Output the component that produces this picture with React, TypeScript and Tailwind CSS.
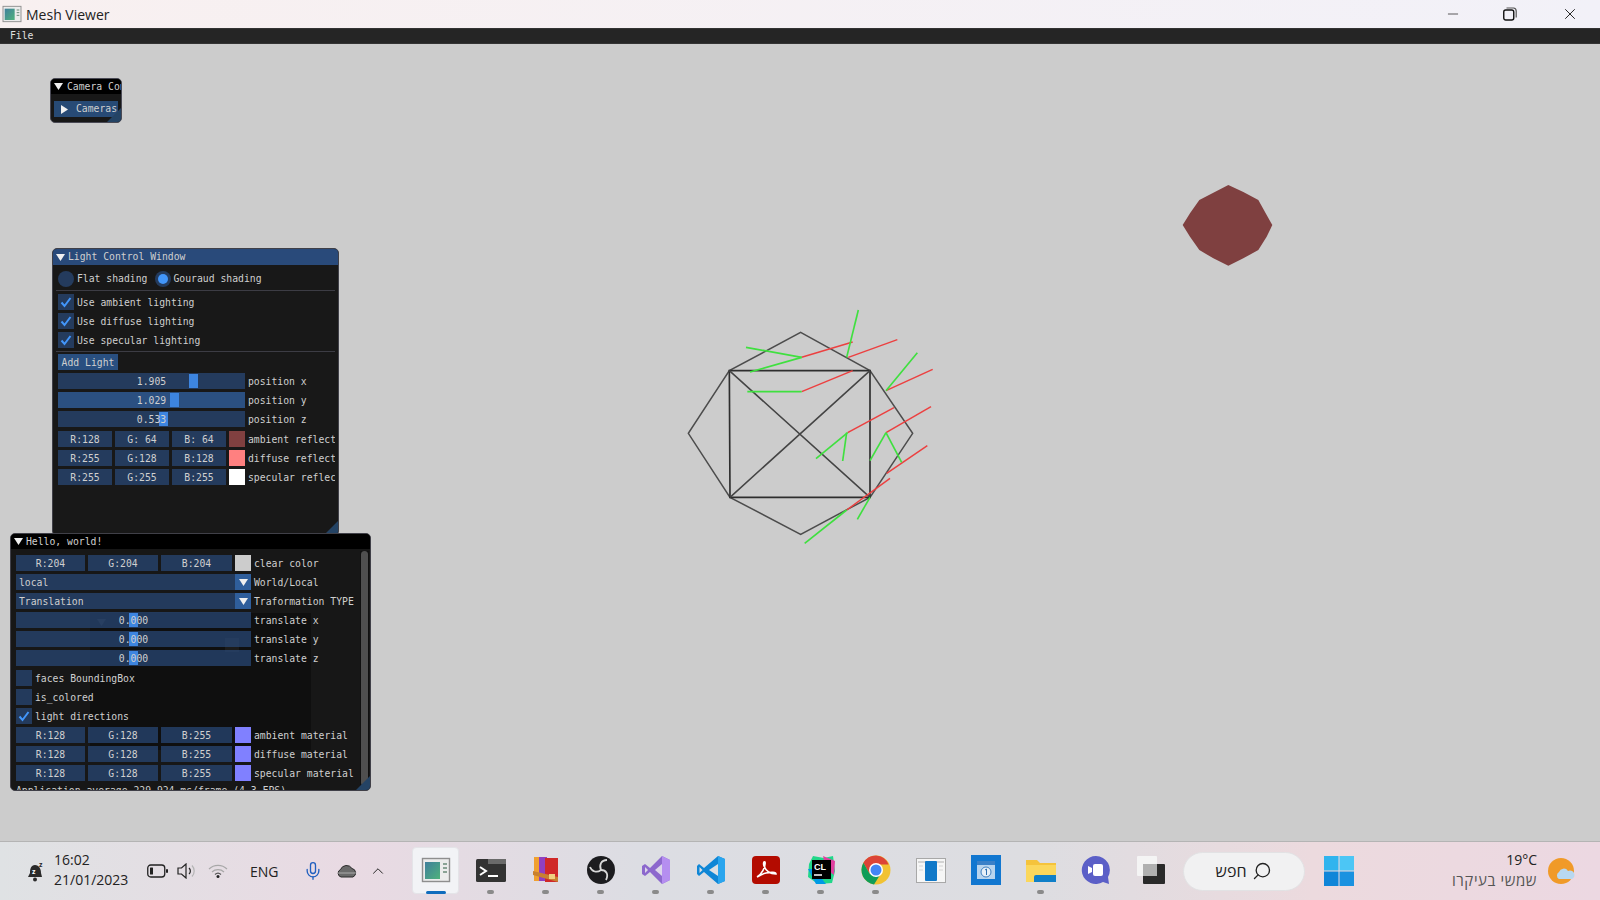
import React from 'react';
import { ChevronUp, Mic, Minus, Search, X } from 'lucide-react';

const mono = "font-['DejaVu_Sans_Mono','Liberation_Mono',monospace] text-[9.75px] leading-[18px] text-[#cfcfcf] whitespace-nowrap";
const frame = 'bg-[#294a7a]/70';

function Tri({ right = false }: { right?: boolean }) {
  return (
    <svg width="9" height="9" viewBox="0 0 9 9" className="shrink-0">
      <polygon points={right ? '1,0 8,4.5 1,9' : '0,1 9,1 4.5,8'} fill="#f0f0f0" />
    </svg>
  );
}

function Check({ label, on = true, className = '' }: { label: string; on?: boolean; className?: string }) {
  return (
    <div className={`flex h-4 gap-[3px] ${className}`}>
      <div className={`w-4 h-4 shrink-0 flex items-center justify-center ${frame}`}>
        {on && (
          <svg width="12" height="12" viewBox="0 0 12 12">
            <path d="M1.5 6.5 L4.5 10 L10.5 2" fill="none" stroke="#4296fa" strokeWidth="2" />
          </svg>
        )}
      </div>
      <span>{label}</span>
    </div>
  );
}

function Slider({ value, label, w, grab, hovered = false }: { value: string; label: string; w: string; grab: string; hovered?: boolean }) {
  return (
    <div className="flex h-4 gap-[3px]">
      <div className={`relative h-4 shrink-0 text-center ${w} ${hovered ? 'bg-[#2b5081]' : frame}`}>
        <div className={`absolute top-[1px] bottom-[1px] w-[9px] bg-[#3d85e0] ${grab}`} />
        <span className="relative">{value}</span>
      </div>
      <span>{label}</span>
    </div>
  );
}

function ColorRow({ r, g, b, swatch, label, wide = false, className = '' }: { r: string; g: string; b: string; swatch: string; label: string; wide?: boolean; className?: string }) {
  const box = `${frame} h-4 shrink-0 text-center`;
  return (
    <div className={`flex h-4 gap-[3px] ${className}`}>
      <div className={`${box} ${wide ? 'w-[69px]' : 'w-[54px]'}`}>{r}</div>
      <div className={`${box} ${wide ? 'w-[70px]' : 'w-[54px]'}`}>{g}</div>
      <div className={`${box} ${wide ? 'w-[71px]' : 'w-[54px]'}`}>{b}</div>
      <div className={`w-4 h-4 shrink-0 ${swatch}`} />
      <span>{label}</span>
    </div>
  );
}

function Combo({ value, label }: { value: string; label: string }) {
  return (
    <div className="flex h-4 gap-[3px]">
      <div className={`flex w-[235px] h-4 shrink-0 justify-between ${frame}`}>
        <span className="pl-[3px]">{value}</span>
        <div className="w-4 h-4 bg-[#2f5e9b] flex items-center justify-center"><Tri /></div>
      </div>
      <span>{label}</span>
    </div>
  );
}

function Grip() {
  return <div className="absolute right-0 bottom-0 w-[14px] h-[14px] bg-[#244364] [clip-path:polygon(100%_0,100%_100%,0_100%)]" />;
}

function CameraWindow() {
  return (
    <div className={`absolute left-[50px] top-[34px] w-[72px] h-[45px] rounded-[5px] overflow-hidden bg-[#181818] border border-[#4a4a55] ${mono}`}>
      <div className="flex items-center h-[15px] pl-[3px] gap-[4px] bg-black">
        <Tri />
        <span>Camera Control</span>
      </div>
      <div className="flex items-center gap-[7px] h-4 mt-[7px] ml-[3px] mr-[3px] pl-[6px] bg-[#274a75] overflow-hidden">
        <Tri right />
        <span>Cameras</span>
      </div>
      <Grip />
    </div>
  );
}

function LightWindow() {
  return (
    <div className={`absolute left-[52px] top-[204px] w-[287px] h-[288px] rounded-[5px] overflow-hidden bg-[#181818] border border-[#404048] ${mono}`}>
      <div className="flex items-center h-4 pl-[3px] gap-[3px] bg-[#294a7a]">
        <Tri />
        <span>Light Control Window</span>
      </div>
      <div className="flex flex-col gap-[3px] pt-[6px] pl-[5px] mr-[3px] overflow-hidden">
        <div className="flex h-4 items-center">
          <div className={`w-4 h-4 shrink-0 rounded-full ${frame}`} />
          <span className="ml-[3px]">Flat shading</span>
          <div className={`w-4 h-4 shrink-0 rounded-full ml-[8px] flex items-center justify-center ${frame}`}>
            <div className="w-[10px] h-[10px] rounded-full bg-[#4296fa]" />
          </div>
          <span className="ml-[2px]">Gouraud shading</span>
        </div>
        <div className="h-px -ml-[2px] bg-[#3c3c44]" />
        <Check label="Use ambient lighting" />
        <Check label="Use diffuse lighting" />
        <Check label="Use specular lighting" />
        <div className="h-px -ml-[2px] bg-[#3c3c44]" />
        <div className="w-[60px] h-4 text-center bg-[#294f80] -mt-px">Add Light</div>
        <Slider value="1.905" label="position x" w="w-[187px]" grab="left-[131px]" />
        <Slider value="1.029" label="position y" w="w-[187px]" grab="left-[112px]" hovered />
        <Slider value="0.533" label="position z" w="w-[187px]" grab="left-[101px]" />
        <ColorRow className="mt-px" r="R:128" g="G: 64" b="B: 64" swatch="bg-[#804040]" label="ambient reflection" />
        <ColorRow r="R:255" g="G:128" b="B:128" swatch="bg-[#ff8080]" label="diffuse reflection" />
        <ColorRow r="R:255" g="G:255" b="B:255" swatch="bg-white" label="specular reflection" />
      </div>
      <Grip />
    </div>
  );
}

function HelloWindow() {
  return (
    <div className={`absolute left-[10px] top-[489px] w-[361px] h-[258px] rounded-[5px] overflow-hidden bg-[#171717] border border-[#404048] ${mono}`}>
      <div className="flex items-center h-[15px] pl-[3px] gap-[3px] bg-black">
        <Tri />
        <span>Hello, world!</span>
      </div>
      {/* window behind shows through */}
      <div className="absolute left-[79px] top-[79px] w-[221px] h-[137px] bg-black/35">
        <div className="absolute left-[7px] top-[5px] opacity-10"><Tri /></div>
        <div className="absolute left-[135px] top-[25px] w-[14px] h-[14px] bg-white/5" />
      </div>
      <div className="relative flex flex-col gap-[3px] pt-[6px] pl-[5px] pr-[10px] h-[241px] overflow-hidden">
        <ColorRow wide r="R:204" g="G:204" b="B:204" swatch="bg-[#cccccc]" label="clear color" />
        <Combo value="local" label="World/Local" />
        <Combo value="Translation" label="Traformation TYPE" />
        <Slider value="0.000" label="translate x" w="w-[235px]" grab="left-[113px]" />
        <Slider value="0.000" label="translate y" w="w-[235px]" grab="left-[113px]" />
        <Slider value="0.000" label="translate z" w="w-[235px]" grab="left-[113px]" />
        <Check className="mt-px" on={false} label="faces BoundingBox" />
        <Check on={false} label="is_colored" />
        <Check label="light directions" />
        <ColorRow wide r="R:128" g="G:128" b="B:255" swatch="bg-[#8080ff]" label="ambient material" />
        <ColorRow wide r="R:128" g="G:128" b="B:255" swatch="bg-[#8080ff]" label="diffuse material" />
        <ColorRow wide r="R:128" g="G:128" b="B:255" swatch="bg-[#8080ff]" label="specular material" />
        <div className="-mt-[2px]">Application average 229.924 ms/frame (4.3 FPS)</div>
      </div>
      <div className="absolute right-[1px] top-[17px] bottom-[4px] w-[9px] px-[1px] bg-black/30">
        <div className="h-full rounded-full bg-[#4f4f4f]" />
      </div>
      <Grip />
    </div>
  );
}

function Mesh() {
  const red = [[395,172,548,126],[535,172,682,119],[395,275,548,212],[648,272,788,208],[533,398,672,323],[648,398,783,320],[650,520,772,437],[530,630,660,535]];
  const green = [[395,172,228,142],[395,172,240,216],[530,172,565,30],[395,275,232,275],[648,272,742,158],[533,398,438,476],[530,398,518,483],[648,398,600,482],[648,398,695,487],[600,592,562,658],[530,630,404,730]];
  return (
    <svg className="absolute left-[670px] top-[256px]" width="270" height="250" viewBox="0 0 810 750">
      <polygon points="392,97 600,212 728,400 600,592 392,703 180,592 55,400 178,212" fill="none" stroke="#4c4c4c" strokeWidth="4.5" />
      <polygon points="178,212 600,212 600,592 180,592" fill="none" stroke="#2e2e2e" strokeWidth="5" />
      <path d="M178 212 L600 592 M180 592 L600 212" stroke="#444" strokeWidth="4.5" />
      {red.map((l, i) => <line key={i} x1={l[0]} y1={l[1]} x2={l[2]} y2={l[3]} stroke="#ec4040" strokeWidth="4.5" />)}
      {green.map((l, i) => <line key={i} x1={l[0]} y1={l[1]} x2={l[2]} y2={l[3]} stroke="#3fe03f" strokeWidth="5" />)}
    </svg>
  );
}

function Blob() {
  return (
    <svg className="absolute left-[1160px] top-[126px]" width="120" height="110" viewBox="0 0 360 330">
      <polygon points="205,45 250,66 295,90 320,135 337,165 320,200 295,240 250,265 205,287 160,265 118,240 90,200 68,165 90,130 118,90 160,68" fill="#7f4040" />
    </svg>
  );
}

function AppIcon({ size = 30, id }: { size?: number; id: string }) {
  return (
    <svg width={size} height={size} viewBox="0 0 30 30">
      <defs>
        <linearGradient id={id} x1="0" y1="0" x2="1" y2="1">
          <stop offset="0" stopColor="#3f7f9c" />
          <stop offset="1" stopColor="#4fb27c" />
        </linearGradient>
      </defs>
      <rect x="1.5" y="3.5" width="27" height="23" fill="#ececec" stroke="#8e8e8e" strokeWidth="1.4" />
      <rect x="4" y="7" width="15" height="17" fill={`url(#${id})`} />
      <path d="M22 9h4M22 13h4M22 17h4" stroke="#6a8a78" strokeWidth="1.5" />
    </svg>
  );
}

const icons: Record<string, React.ReactNode> = {
  terminal: (
    <svg width="30" height="30" viewBox="0 0 30 30">
      <rect x="0" y="4" width="30" height="23" rx="1.5" fill="#333" />
      <rect x="12" y="4" width="18" height="5" fill="#6a6a6a" />
      <path d="M4 12 L10 16 L4 20" fill="none" stroke="#fff" strokeWidth="2" />
      <path d="M12 21h10" stroke="#fff" strokeWidth="2" />
    </svg>
  ),
  rar: (
    <svg width="30" height="30" viewBox="0 0 30 30">
      <rect x="3" y="2" width="8" height="24" fill="#f0a030" />
      <rect x="8" y="2" width="8" height="24" fill="#9040c0" />
      <rect x="14" y="3" width="13" height="24" fill="#d02828" />
      <path d="M2 16 L27 22 L27 27 L2 20Z" fill="#c88030" />
      <rect x="18" y="19" width="6" height="5" fill="#f0d080" />
    </svg>
  ),
  obs: (
    <svg width="30" height="30" viewBox="0 0 30 30">
      <circle cx="15" cy="15" r="14" fill="#1c1c1f" />
      <path d="M15 15 C13 10 15 5 21 5" fill="none" stroke="#d8d8d8" strokeWidth="1.8" />
      <path d="M15 15 C11 18 6 17 4 12" fill="none" stroke="#d8d8d8" strokeWidth="1.8" />
      <path d="M15 15 C20 15 23 19 20 25" fill="none" stroke="#d8d8d8" strokeWidth="1.8" />
    </svg>
  ),
  vs: (
    <svg width="30" height="30" viewBox="0 0 30 30">
      <path d="M21 1 L29 5 V25 L21 29 L9 17 L4 21 L1 19 V11 L4 9 L9 13Z" fill="#8c68cd" />
      <path d="M21 9 L14 15 L21 21Z" fill="#dcd6ea" />
      <path d="M4 12 V18 L7 15Z" fill="#dcd6ea" />
      <path d="M21 1 L29 5 V25 L21 29 V21 L21 9Z" fill="#b58ef0" />
    </svg>
  ),
  code: (
    <svg width="30" height="30" viewBox="0 0 30 30">
      <path d="M22 1 L29 4 V26 L22 29 L8 17 L3 21 L1 19 V11 L3 9 L8 13Z" fill="#0f86d6" />
      <path d="M22 1 L29 4 V26 L22 29Z" fill="#2aa5ee" />
      <path d="M22 9 L13 15 L22 21Z" fill="#dde0e4" />
      <path d="M3.5 12 V18 L6.5 15Z" fill="#dde0e4" />
    </svg>
  ),
  acrobat: (
    <svg width="30" height="30" viewBox="0 0 30 30">
      <rect x="1" y="1" width="28" height="28" rx="4" fill="#b30b00" />
      <path d="M6 22 C10 20 15 12 14 7 C13 6 12 8 13 11 C15 16 19 19 25 19 C25 17 20 17 15 18 C11 19 8 21 6 22Z" fill="none" stroke="#fff" strokeWidth="1.6" />
    </svg>
  ),
  clion: (
    <svg width="30" height="30" viewBox="0 0 30 30">
      <path d="M7 1 L18 3 L27 1 L29 16 L26 28 L12 29 L2 22 L3 9Z" fill="#21d789" />
      <path d="M17 1 L29 6 L28 20 L20 14Z" fill="#e040a0" />
      <path d="M2 14 L10 29 L20 29 L8 14Z" fill="#009ae5" />
      <rect x="6" y="5" width="19" height="19" fill="#000" />
      <text x="8" y="15" fill="#fff" fontFamily="Liberation Sans" fontWeight="700" fontSize="9">CL</text>
      <path d="M8 20h8" stroke="#fff" strokeWidth="1.5" />
    </svg>
  ),
  chrome: (
    <svg width="30" height="30" viewBox="0 0 30 30">
      <circle cx="15" cy="15" r="14.5" fill="#f1c232" />
      <path d="M15 .5 A14.5 14.5 0 0 0 2.4 7.8 L8.5 18.5 L15 9.5 H27.6 A14.5 14.5 0 0 0 15 .5Z" fill="#dc4437" />
      <path d="M2.4 7.8 A14.5 14.5 0 0 0 13 29.4 L19 20 L8.5 18.5Z" fill="#0f9d58" />
      <circle cx="15" cy="15" r="7" fill="#fff" />
      <circle cx="15" cy="15" r="5.5" fill="#4285f4" />
    </svg>
  ),
  notes: (
    <svg width="30" height="30" viewBox="0 0 30 30">
      <rect x=".5" y="3.5" width="29" height="24" fill="#f6f6f6" stroke="#a8a8a8" />
      <path d="M2 7h26" stroke="#b0b0b0" />
      <rect x="9" y="6" width="12" height="20" rx="1" fill="#1078c8" />
      <path d="M3 11h4M3 15h4M23 11h4M23 15h4" stroke="#d4d4d4" />
    </svg>
  ),
  calendar: (
    <svg width="30" height="30" viewBox="0 0 30 30">
      <rect width="30" height="30" fill="#1277d0" />
      <rect x="6" y="6" width="18" height="18" fill="#b8d4ee" />
      <rect x="6" y="6" width="18" height="4" fill="#3a80c8" />
      <circle cx="15" cy="17" r="5" fill="#e8f0f8" stroke="#4080c0" />
      <path d="M14 15 l1.5 -1 v6" fill="none" stroke="#3070b0" />
    </svg>
  ),
  folder: (
    <svg width="30" height="30" viewBox="0 0 30 30">
      <path d="M0 5 H11 L14 8 H30 V27 H0Z" fill="#f5c33b" />
      <path d="M0 10 H30 V27 H0Z" fill="#fbd75b" />
      <path d="M10 20 H30 V27 H8 V22 A2 2 0 0 1 10 20Z" fill="#0f7fc8" />
    </svg>
  ),
  chat: (
    <svg width="30" height="30" viewBox="0 0 30 30">
      <path d="M15 1 A14 14 0 1 0 22 27 L28 29 L27 22 A14 14 0 0 0 15 1Z" fill="#5b5fc7" />
      <rect x="12" y="9" width="10" height="12" rx="2" fill="#fff" />
      <path d="M7 11 L11 13 V17 L7 19Z" fill="#fff" />
    </svg>
  ),
  stacks: (
    <svg width="30" height="30" viewBox="0 0 30 30">
      <rect x="1" y="1" width="20" height="20" rx="1" fill="#f4f4f4" />
      <rect x="7" y="9" width="22" height="20" rx="1" fill="#2a2a2a" />
      <rect x="7" y="9" width="14" height="12" fill="#b0b0b0" />
    </svg>
  ),
};

function TaskItem({ name, dot = true }: { name: string; dot?: boolean }) {
  return (
    <div className="relative w-[55px] h-full shrink-0 flex items-center justify-center pb-[2px]">
      {icons[name]}
      {dot && <div className="absolute bottom-[6px] w-[7px] h-1 rounded-full bg-[#8a8a8a]" />}
    </div>
  );
}

function Taskbar() {
  const apps = ['terminal', 'rar', 'obs', 'vs', 'code', 'acrobat', 'clion', 'chrome', 'notes', 'calendar', 'folder', 'chat', 'stacks'];
  const noDot = ['notes', 'calendar', 'chat', 'stacks'];
  return (
    <div className="flex items-center h-[59px] shrink-0 pl-[27px] border-t border-[#b4b4b4] bg-[linear-gradient(90deg,#dfe2e4_0%,#e9dae3_22%,#dcdde3_40%,#dddde1_65%,#ecdade_82%,#ecd8e2_100%)] font-['Open_Sans','Liberation_Sans',sans-serif] text-[#222]">
      <svg width="18" height="21" viewBox="0 0 18 21" className="shrink-0">
        <path d="M8 4 C4 4 3 8 3 12 L1 16 H15 L14 12 C14 8 12 4 8 4Z" fill="#2a2a2a" />
        <circle cx="8" cy="18.5" r="2" fill="#2a2a2a" />
        <text x="5" y="13" fontSize="7" fontWeight="700" fill="#fff">z</text>
        <text x="12" y="6" fontSize="7" fontWeight="700" fill="#2a2a2a">z</text>
      </svg>
      <div className="ml-[9px] w-[73px] -mt-[3px] text-[14px] leading-[20px] whitespace-nowrap shrink-0">
        <div>16:02</div>
        <div>21/01/2023</div>
      </div>
      <svg width="21" height="14" viewBox="0 0 21 14" className="ml-[20px] shrink-0">
        <rect x=".75" y="1" width="17" height="12" rx="3" fill="none" stroke="#222" strokeWidth="1.3" />
        <rect x="3" y="3.5" width="3" height="7" rx=".5" fill="#222" />
        <rect x="19" y="5" width="2" height="4" rx="1" fill="#222" />
      </svg>
      <svg width="20" height="16" viewBox="0 0 20 16" className="ml-[9px] shrink-0">
        <path d="M1 5 H4.5 L9 1 V15 L4.5 11 H1Z" fill="none" stroke="#222" strokeWidth="1.2" />
        <path d="M12 5 A4 4 0 0 1 12 11" fill="none" stroke="#222" strokeWidth="1.2" />
        <path d="M15 2.5 A8 8 0 0 1 15 13.5" fill="none" stroke="#b5b5b5" strokeWidth="1.2" />
      </svg>
      <svg width="20" height="14" viewBox="0 0 20 14" className="ml-[11px] shrink-0">
        <path d="M1 5 A13 13 0 0 1 19 5 M4 8 A9 9 0 0 1 16 8" fill="none" stroke="#a8a8a8" strokeWidth="1.2" />
        <path d="M7 10.5 A4.5 4.5 0 0 1 13 10.5" fill="none" stroke="#555" strokeWidth="1.2" />
        <circle cx="10" cy="12.5" r="1.5" fill="#222" />
      </svg>
      <span className="ml-[22px] w-[28px] text-[14px] shrink-0">ENG</span>
      <Mic size={20} strokeWidth={1.6} className="ml-[25px] text-[#1f5fbf] shrink-0" />
      <svg width="22" height="14" viewBox="0 0 22 14" className="ml-[13px] shrink-0">
        <path d="M5 13 A4 4 0 0 1 4.5 5.5 A6.5 6.5 0 0 1 16 4.5 A4.5 4.5 0 0 1 17 13Z" fill="#6a6a6a" stroke="#2a2a2a" />
        <path d="M1.5 9 H21" stroke="#d8d8d8" strokeWidth=".6" />
      </svg>
      <ChevronUp size={18} strokeWidth={1.3} className="ml-[11px] shrink-0" />
      <div className="relative w-[55px] h-full ml-[21px] shrink-0 flex items-center justify-center pb-[2px]">
        <div className="absolute left-[4px] top-[5px] w-[47px] h-[47px] rounded-[4px] bg-[#f2f3f6] border border-[#e4e4e8]" />
        <div className="relative"><AppIcon id="meshtask" /></div>
        <div className="absolute bottom-[6px] w-5 h-[3px] rounded-full bg-[#0f6cbd]" />
      </div>
      {apps.map((a) => <TaskItem key={a} name={a} dot={!noDot.includes(a)} />)}
      <div className="flex items-center justify-center gap-[6px] w-[122px] h-[39px] ml-[5px] shrink-0 rounded-full bg-[#f1f1f2] border border-[#e2e2e4]">
        <span dir="rtl" className="text-[16px] leading-none">חפש</span>
        <Search size={20} strokeWidth={1.6} className="-scale-x-100" />
      </div>
      <svg width="30" height="30" viewBox="0 0 30 30" className="ml-[19px] shrink-0">
        <rect x="0" y="0" width="14.5" height="14.5" fill="#30b4ee" />
        <rect x="15.5" y="0" width="14.5" height="14.5" fill="#4cc6f5" />
        <rect x="0" y="15.5" width="14.5" height="14.5" fill="#0f85d8" />
        <rect x="15.5" y="15.5" width="14.5" height="14.5" fill="#1a92e0" />
      </svg>
      <div className="ml-auto flex items-center pr-[24px]">
        <div className="text-right whitespace-nowrap -mt-[2px]">
          <div className="text-[14px] leading-[20px]">19°C</div>
          <div dir="rtl" className="text-[15px] tracking-[0.6px] leading-[20px] text-[#555]">שמשי בעיקרו</div>
        </div>
        <svg width="28" height="28" viewBox="0 0 28 28" className="ml-[11px] shrink-0">
          <circle cx="13" cy="14" r="13" fill="#f09a28" />
          <path d="M11 22 A4 4 0 0 1 11 15 A5 5 0 0 1 20 14 A4 4 0 0 1 24 22Z" fill="#b8d8f0" />
        </svg>
      </div>
    </div>
  );
}

export default function App() {
  return (
    <div className="flex flex-col w-[1600px] h-[900px] overflow-hidden bg-[#cccccc]">
      <div className="flex items-center h-7 shrink-0 pl-[2px] bg-[linear-gradient(90deg,#f8f0f0,#f2f1f8)]">
        <AppIcon size={20} id="meshtitle" />
        <span className="ml-1 mt-px text-[14px] text-[#222] font-['Open_Sans','Liberation_Sans',sans-serif]">Mesh Viewer</span>
        <div className="ml-auto flex items-center">
          <Minus size={16} strokeWidth={1.2} className="mr-[42px] text-[#333]" />
          <svg width="14" height="14" viewBox="0 0 14 14" className="mr-[44px]">
            <rect x=".75" y="3" width="10" height="10" rx="2" fill="none" stroke="#111" strokeWidth="1.4" />
            <path d="M3.5 1 H10.5 A3 3 0 0 1 13.2 4 V10.5" fill="none" stroke="#555" strokeWidth="1.2" />
          </svg>
          <X size={18} strokeWidth={1.3} className="mr-[21px] text-[#222]" />
        </div>
      </div>
      <div className="h-4 shrink-0 pl-[10px] flex items-center bg-[#252525] border-y border-[#333] font-['DejaVu_Sans_Mono',monospace] text-[9.75px] text-[#e0e0e0]">File</div>
      <div className="relative flex-1">
        <Blob />
        <Mesh />
        <CameraWindow />
        <LightWindow />
        <HelloWindow />
      </div>
      <Taskbar />
    </div>
  );
}
